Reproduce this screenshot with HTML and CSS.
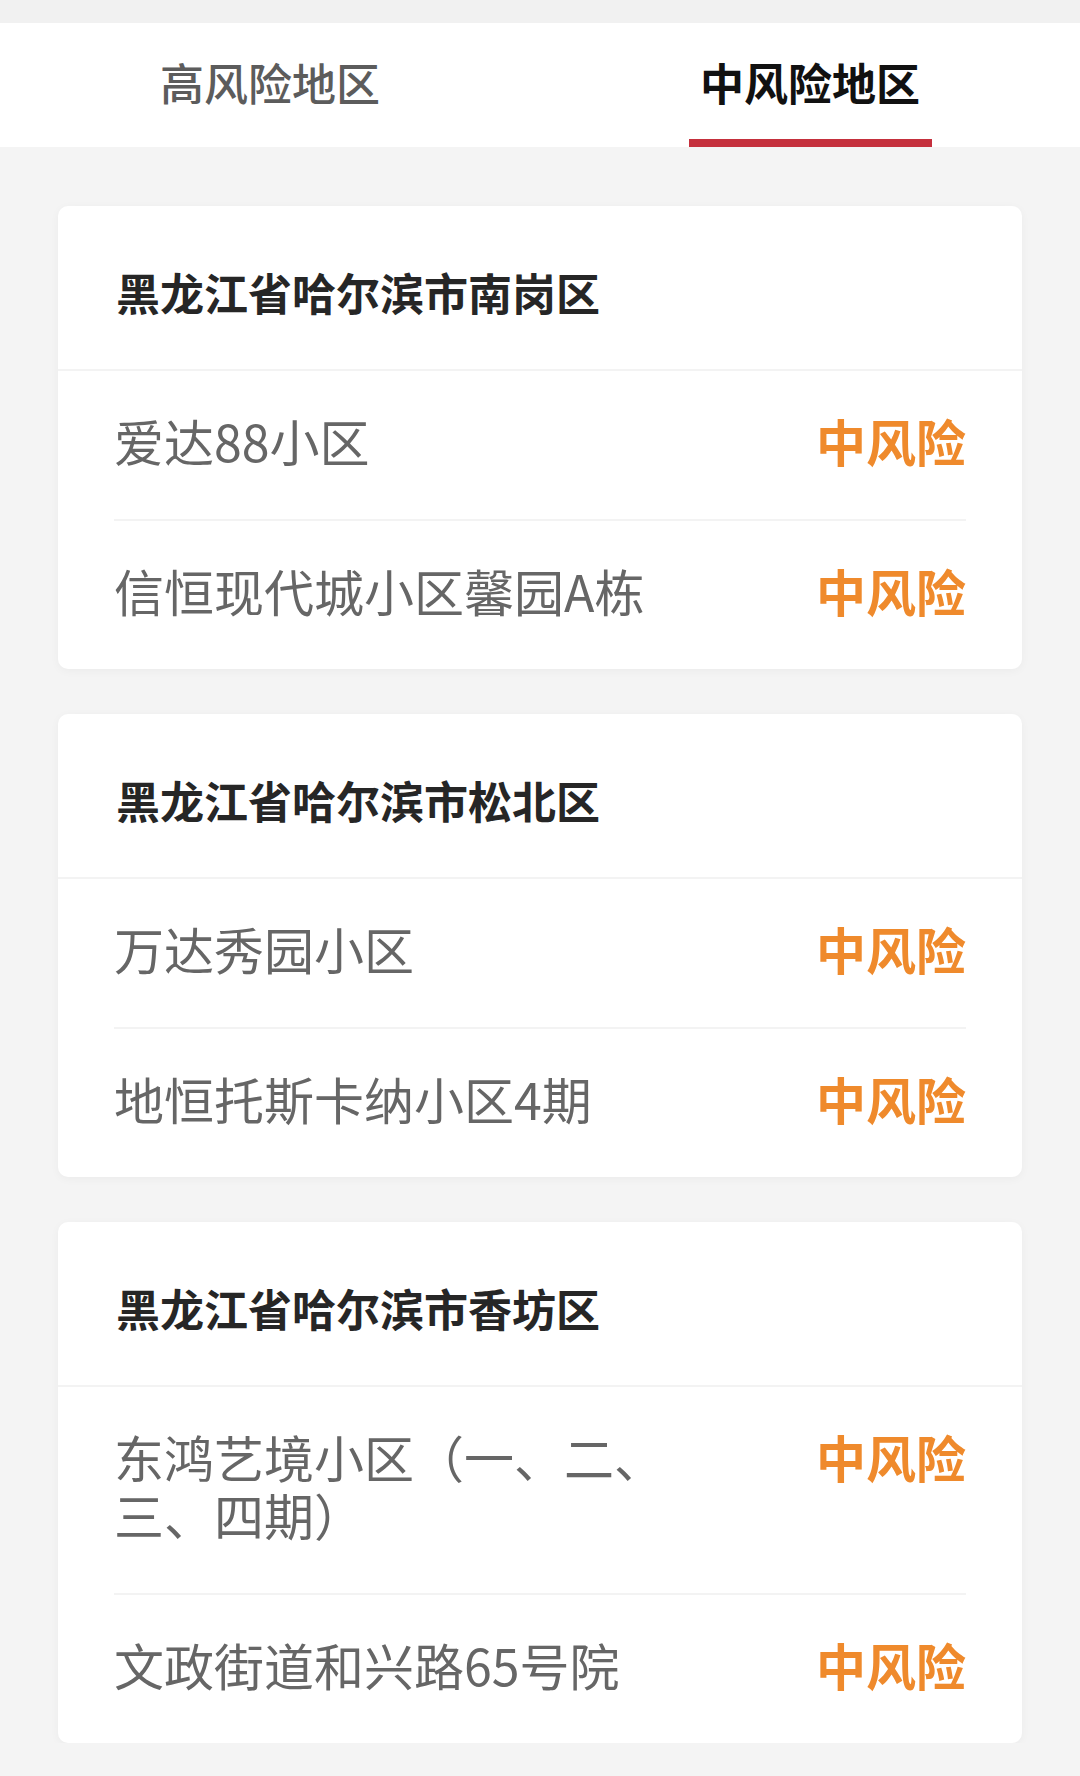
FILE: index.html
```html
<!DOCTYPE html>
<html lang="zh-CN">
<head>
  <meta charset="UTF-8" />
  <title>中风险地区</title>
  <link rel="stylesheet" href="styles.css">
</head>
<body>
  <div class="franja"></div>
  <div class="pestanas">
    <div class="pestana">高风险地区</div>
    <div class="pestana activa">中风险地区</div>
  </div>

  <div class="lista">
    <div class="tarjeta">
      <div class="cabecera">黑龙江省哈尔滨市南岗区</div>
      <div class="fila"><span class="lugar">爱达88小区</span><span class="nivel">中风险</span></div>
      <div class="fila"><span class="lugar">信恒现代城小区馨园A栋</span><span class="nivel">中风险</span></div>
    </div>

    <div class="tarjeta">
      <div class="cabecera">黑龙江省哈尔滨市松北区</div>
      <div class="fila"><span class="lugar">万达秀园小区</span><span class="nivel">中风险</span></div>
      <div class="fila"><span class="lugar">地恒托斯卡纳小区4期</span><span class="nivel">中风险</span></div>
    </div>

    <div class="tarjeta">
      <div class="cabecera">黑龙江省哈尔滨市香坊区</div>
      <div class="fila"><span class="lugar">东鸿艺境小区（一、二、三、四期）</span><span class="nivel">中风险</span></div>
      <div class="fila"><span class="lugar">文政街道和兴路65号院</span><span class="nivel">中风险</span></div>
    </div>
  </div>
</body>
</html>
```

FILE: styles.css
```css
* { box-sizing: border-box; }
body {
  margin: 0; padding: 0; background: #f4f4f4;
  font-family: "Noto Sans CJK SC", "Noto Sans", sans-serif;
}
.franja { height: 23px; background: #f1f1f1; }
.pestanas { display: flex; background: #fff; height: 124px; }
.pestana {
  flex: 1; display: flex; flex-direction: column; align-items: center;
  padding-top: 29px; font-size: 44px; line-height: 60px;
  color: #5c5c5c; font-weight: 500;
}
.pestana.activa { color: #111; font-weight: 700; }
.pestana.activa::after {
  content: ''; display: block; width: 243px; height: 8px;
  margin-top: auto; background: #c5303d;
}
.lista {
  display: flex; flex-direction: column; gap: 45px;
  padding: 59px 58px 0;
}
.tarjeta {
  background: #fff; border-radius: 10px;
  box-shadow: 0 2px 10px rgba(0, 0, 0, 0.04);
}
.cabecera {
  padding: 56px 58px 47px; font-size: 44px; line-height: 60px;
  font-weight: 700; color: #262626; border-bottom: 2px solid #f3f3f3;
}
.fila {
  display: flex; justify-content: space-between; align-items: flex-start;
  margin: 0 56px; padding: 40px 0 50px;
}
.fila + .fila { border-top: 2px solid #f3f3f3; }
.lugar {
  max-width: 562px; font-size: 50px; line-height: 58px; color: #666;
}
.nivel {
  font-size: 50px; line-height: 58px; font-weight: 700; color: #ef8a2c;
  flex-shrink: 0;
}
```
